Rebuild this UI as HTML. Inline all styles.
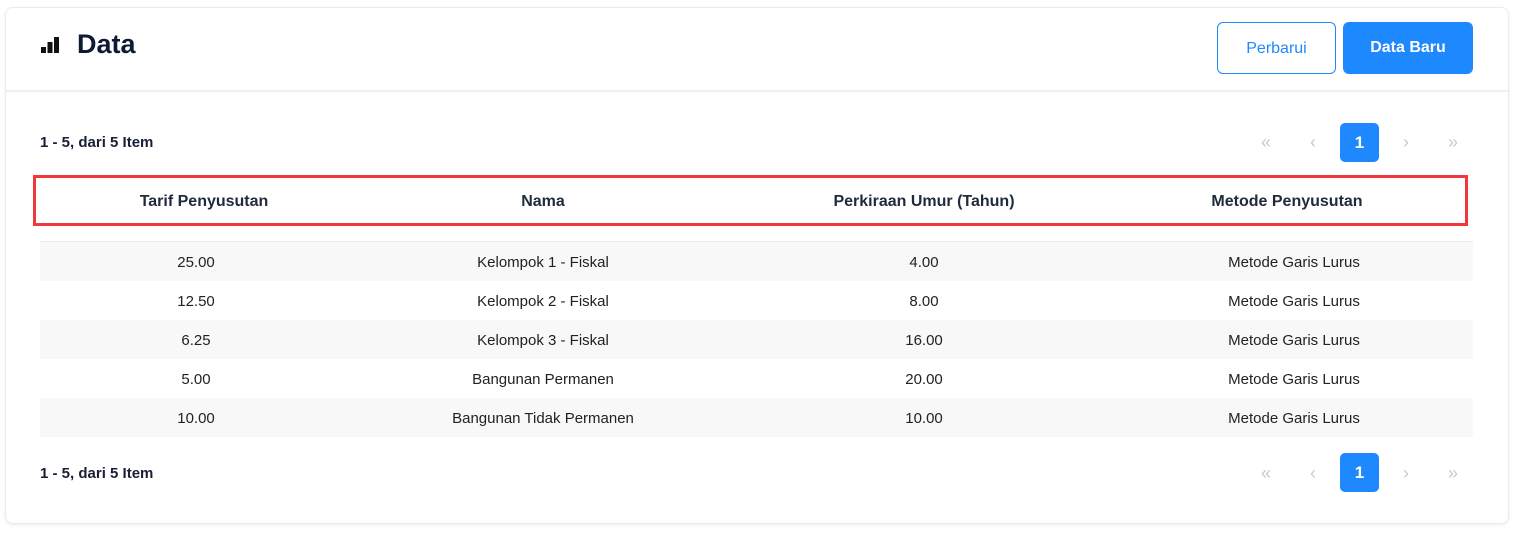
<!DOCTYPE html>
<html><head><style>
body{margin:0;width:1517px;height:535px;background:#fff;font-family:"Liberation Sans",sans-serif;position:relative;overflow:hidden;color:#1a1f36}
.card{position:absolute;left:5px;top:7px;width:1502px;height:515px;border:1px solid #ececec;border-radius:8px;box-shadow:0 1px 3px rgba(0,0,0,.08)}
.hdr{position:absolute;left:5px;top:90px;width:1503px;border-top:2px solid #efefef}
.t{position:absolute;font-size:14px}
.b{font-weight:bold}
.btn{position:absolute;top:22px;height:52px;border-radius:6px;font-size:16px;line-height:52px;text-align:center}
.pg{position:absolute;width:40px;height:40px;line-height:40px;text-align:center;color:#c5cad6;font-size:18px}
.row{position:absolute;left:40px;width:1433px;height:39px;line-height:41px;font-size:15px;color:#222}
.row span{position:absolute;transform:translateX(-50%)}
.s{background:#f8f8f8}
</style></head><body>
<div class="card"></div>
<div class="hdr"></div>
<svg style="position:absolute;left:41px;top:36px" width="20" height="18"><rect x="0" y="11" width="5" height="6" fill="#111"/><rect x="6.5" y="6" width="5" height="11" fill="#111"/><rect x="13" y="1" width="5" height="16" fill="#111"/></svg>
<div class="t b" style="left:77px;top:29px;font-size:27px;color:#0f1a33">Data</div>
<div class="btn" style="left:1217px;width:117px;height:50px;border:1px solid #1e88ff;color:#1e88ff">Perbarui</div>
<div class="btn b" style="left:1343px;width:130px;background:#1e88ff;color:#fff">Data Baru</div>
<div class="t b" style="left:40px;top:134px;font-size:15px">1 - 5, dari 5 Item</div>
<div class="t b" style="left:40px;top:465px;font-size:15px">1 - 5, dari 5 Item</div>
<div class="pg" style="left:1246px;top:122px">«</div><div class="pg" style="left:1293px;top:122px">‹</div>
<div class="pg" style="left:1340px;top:123px;background:#1e88ff;color:#fff;border-radius:5px;font-size:17px;font-weight:bold;width:39px;height:39px;line-height:39px">1</div>
<div class="pg" style="left:1386px;top:122px">›</div><div class="pg" style="left:1433px;top:122px">»</div>
<div class="pg" style="left:1246px;top:453px">«</div><div class="pg" style="left:1293px;top:453px">‹</div>
<div class="pg" style="left:1340px;top:453px;background:#1e88ff;color:#fff;border-radius:5px;font-size:17px;font-weight:bold;width:39px;height:39px;line-height:39px">1</div>
<div class="pg" style="left:1386px;top:453px">›</div><div class="pg" style="left:1433px;top:453px">»</div>
<div style="position:absolute;left:33px;top:175px;width:1429px;height:45px;border:3px solid #f0383a"></div>
<div class="row b" style="top:181px;color:#1f2a3a;font-size:16px"><span style="left:164px">Tarif Penyusutan</span><span style="left:503px">Nama</span><span style="left:884px">Perkiraan Umur (Tahun)</span><span style="left:1247px">Metode Penyusutan</span></div>
<div style="position:absolute;left:40px;top:241px;width:1433px;border-top:1px solid #ececec"></div>
<div class="row s" style="top:242px"><span style="left:156px">25.00</span><span style="left:503px">Kelompok 1 - Fiskal</span><span style="left:884px">4.00</span><span style="left:1254px">Metode Garis Lurus</span></div>
<div class="row" style="top:281px"><span style="left:156px">12.50</span><span style="left:503px">Kelompok 2 - Fiskal</span><span style="left:884px">8.00</span><span style="left:1254px">Metode Garis Lurus</span></div>
<div class="row s" style="top:320px"><span style="left:156px">6.25</span><span style="left:503px">Kelompok 3 - Fiskal</span><span style="left:884px">16.00</span><span style="left:1254px">Metode Garis Lurus</span></div>
<div class="row" style="top:359px"><span style="left:156px">5.00</span><span style="left:503px">Bangunan Permanen</span><span style="left:884px">20.00</span><span style="left:1254px">Metode Garis Lurus</span></div>
<div class="row s" style="top:398px"><span style="left:156px">10.00</span><span style="left:503px">Bangunan Tidak Permanen</span><span style="left:884px">10.00</span><span style="left:1254px">Metode Garis Lurus</span></div>
</body></html>
